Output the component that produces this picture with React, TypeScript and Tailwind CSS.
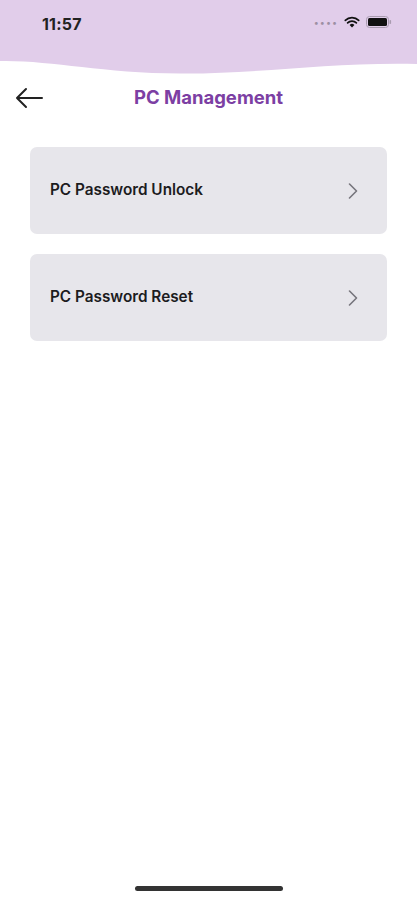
import { ChevronRight } from "lucide-react";

const items = ["PC Password Unlock", "PC Password Reset"];

function StatusBar() {
    return (
        <div className="h-[60px] bg-[#e1cdea] flex items-start justify-between pl-[42px] pr-[25px] pt-[14px]">
            <span className="text-[16px] font-bold text-[#222] leading-[20px] tracking-[0.2px]">11:57</span>
            <div className="flex items-center gap-[6px] pt-[2px]">
                <span className="text-[9px] text-[#9c8fa3] tracking-[1px] leading-none">••••</span>
                <svg width="16" height="12" viewBox="0 0 16 12">
                    <path d="M8 11.5 L5.6 8.9 A3.4 3.4 0 0 1 10.4 8.9 Z" fill="#111" />
                    <path d="M3.6 6.9 A6.2 6.2 0 0 1 12.4 6.9" stroke="#111" strokeWidth="1.7" fill="none" strokeLinecap="round" />
                    <path d="M1.3 4.4 A9.4 9.4 0 0 1 14.7 4.4" stroke="#111" strokeWidth="1.7" fill="none" strokeLinecap="round" />
                </svg>
                <svg width="26" height="12" viewBox="0 0 26 12">
                    <rect x="0.5" y="0.5" width="22" height="11" rx="3" fill="none" stroke="#a99cb0" />
                    <rect x="2" y="2" width="19" height="8" rx="1.5" fill="#111" />
                    <rect x="23.5" y="4" width="1.6" height="4" rx="0.8" fill="#a99cb0" />
                </svg>
            </div>
        </div>
    );
}

export default function App() {
    return (
        <div className="w-[417px] h-[900px] bg-white flex flex-col font-['Inter',sans-serif] relative overflow-hidden">
            <StatusBar />
            <svg width="417" height="15" viewBox="0 0 417 15" preserveAspectRatio="none" className="block">
                <path d="M0 0 H417 V4 C330 2 260 14 180 13.5 C100 13 50 0 0 1 Z" fill="#e1cdea" />
            </svg>

            <div className="h-[46px] flex items-center relative">
                <button className="absolute left-[14px] top-[11px] text-[#222]">
                    <svg width="30" height="24" viewBox="0 0 30 24">
                        <path d="M28 12 H3 M12 3 L3 12 L12 21" stroke="#222" strokeWidth="2" fill="none" strokeLinecap="round" strokeLinejoin="round" />
                    </svg>
                </button>
                <h1 className="w-full text-center text-[18.5px] font-bold text-[#7c3fa3]">PC Management</h1>
            </div>

            <div className="flex flex-col gap-[20px] px-[30px] pt-[26px]">
                {items.map((item) => (
                    <div key={item} className="h-[87px] rounded-[7px] bg-[#e7e6eb] flex items-center justify-between pl-[20px] pr-[24px]">
                        <span className="text-[15.3px] font-semibold text-[#1c1c1e]">{item}</span>
                        <ChevronRight size={28} strokeWidth={1.4} className="text-[#77767c] -mr-[4px]" />
                    </div>
                ))}
            </div>

            <div className="mt-auto mb-[9px] self-center w-[148px] h-[5px] rounded-full bg-[#333]" />
        </div>
    );
}
